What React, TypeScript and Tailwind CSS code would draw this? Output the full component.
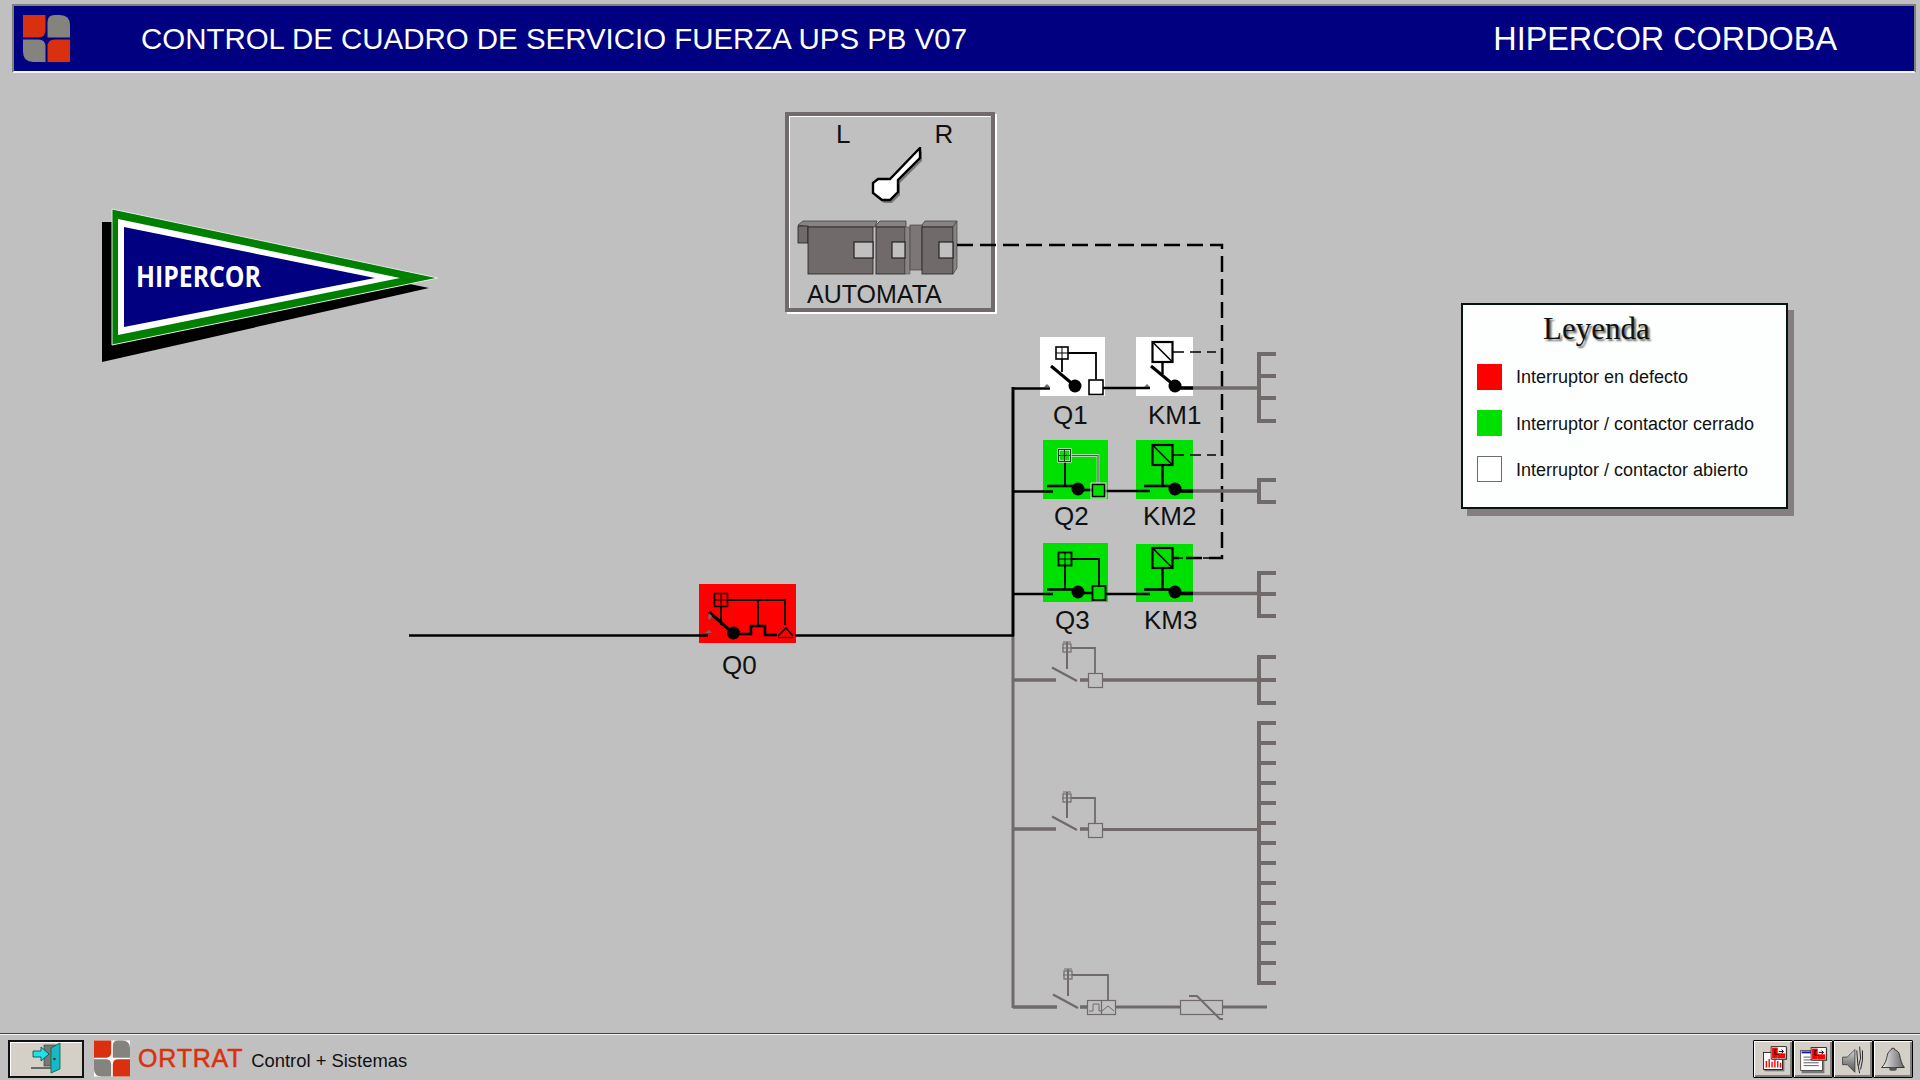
import React from "react";

const GRAY = "#716a6a";

const Logo: React.FC<{ className: string; cross?: string }> = ({ className, cross }) => (
  <svg viewBox="0 0 46 46" className={className}>
    {cross && <rect width="46" height="46" fill={cross} />}
    <path d="M0 0H22V15Q22 22 15 22H0Z" fill="#d9310f" />
    <path d="M24 7Q24 0 31 0H36Q46 0 46 10V22H24Z" fill="#85837d" />
    <path d="M0 24H15Q22 24 22 31V46H10Q0 46 0 36Z" fill="#85837d" />
    <path d="M31 24H46V46H24V31Q24 24 31 24Z" fill="#d9310f" />
  </svg>
);

const Pennant: React.FC = () => (
  <svg viewBox="100 206 342 158" className="absolute left-[100px] top-[133px] w-[342px] h-[158px]">
    <polygon points="102,222 112,222 429,288 102,362" fill="#000" />
    <polygon points="112,209 438,278 112,345" fill="#008000" stroke="#e8e8e8" strokeWidth="1" />
    <polygon points="118,219 400,278 118,335" fill="#fff" />
    <polygon points="124,227 375,278 124,327" fill="#000080" />
    <text x="136" y="287" fill="#fff" fontFamily="'Open Sans', sans-serif" fontWeight="700" fontSize="29" textLength="125" lengthAdjust="spacingAndGlyphs">
      HIPERCOR
    </text>
  </svg>
);

const PlcPanel: React.FC = () => (
  <div className="absolute left-[785px] top-[39px] w-[210px] h-[200px] border-4 border-[#716a6a] shadow-[inset_1px_1px_0_#fff,2px_2px_0_#fff] flex flex-col text-[#111]">
    <div className="flex pt-[6px] pl-[47px] text-[26px] leading-[25px]">
      <span>L</span>
      <span className="ml-[84px]">R</span>
    </div>
    <svg viewBox="789 147 202 135" className="w-[202px] h-[135px]">
      <polygon points="922,151 922,161 900,183 900,195 892,203 884,203 875,196 875,186 880,182 892,182 919,154" fill="#7d7676" />
      <polygon points="920,148 920,158 898,180 898,192 890,200 882,200 873,193 873,183 878,179 890,179 917,151" fill="#fff" stroke="#000" strokeWidth="2.4" />
      {/* top strips */}
      <polygon points="798,225 803,221 877,221 875,227 808,227" fill="#8a8383" stroke="#333" strokeWidth="0.7" />
      <polygon points="876,225 880,221 906,221 906,227 876,227" fill="#8a8383" stroke="#333" strokeWidth="0.7" />
      <polygon points="922,225 925,221 957,221 953,227 922,227" fill="#8a8383" stroke="#333" strokeWidth="0.7" />
      <rect x="798" y="226" width="10" height="17" fill={GRAY} stroke="#222" strokeWidth="0.8" />
      <rect x="808" y="227" width="65" height="47" fill={GRAY} stroke="#222" strokeWidth="0.8" />
      <rect x="876" y="227" width="29" height="47" fill={GRAY} stroke="#222" strokeWidth="0.8" />
      <rect x="905" y="227" width="5" height="47" fill="#8a8383" stroke="#555" strokeWidth="0.6" />
      <rect x="910" y="225" width="12" height="45" fill="#7d7676" stroke="#444" strokeWidth="0.7" />
      <rect x="922" y="227" width="31" height="47" fill={GRAY} stroke="#222" strokeWidth="0.8" />
      <polygon points="953,227 957,221 957,268 953,274" fill="#8a8383" stroke="#444" strokeWidth="0.7" />
      <rect x="854" y="242" width="19" height="16" fill="#c0c0c0" stroke="#222" strokeWidth="1.2" />
      <rect x="892" y="242" width="13" height="16" fill="#c0c0c0" stroke="#222" strokeWidth="1.2" />
      <rect x="939" y="242" width="14" height="16" fill="#c0c0c0" stroke="#222" strokeWidth="1.2" />
    </svg>
    <span className="pl-[18px] text-[25px] leading-[24px]">AUTOMATA</span>
  </div>
);

const Legend: React.FC = () => {
  const rows = [
    { swatch: "bg-[#ff0000]", label: "Interruptor en defecto", pad: "pl-[14px]" },
    { swatch: "bg-[#00e000]", label: "Interruptor / contactor cerrado", pad: "pl-[14px] pt-[1px]" },
    { swatch: "bg-white border border-[#716a6a]", label: "Interruptor / contactor abierto", pad: "pl-[14px] pt-[2px]" },
  ];
  return (
    <div className="absolute left-[1461px] top-[230px] w-[327px] h-[206px] bg-[#fdfffe] border-2 border-[#08140f] shadow-[6px_7px_0_#857e7e] pl-[14px] text-[#111]">
      <h2 className="pl-[66px] pt-[5px] h-[59px] text-[31px] leading-[38px] text-[#111] font-['Liberation_Serif',serif] [text-shadow:2px_2px_2px_#666]">Leyenda</h2>
      <div className="flex flex-col gap-5">
        {rows.map((r) => (
          <div key={r.label} className="flex items-center h-[26px]">
            <span className={`w-[25px] h-[26px] shrink-0 ${r.swatch}`} />
            <span className={`${r.pad} text-[18px] leading-[26px]`}>{r.label}</span>
          </div>
        ))}
      </div>
    </div>
  );
};

const GridBox: React.FC<{ x: number; y: number; s: number; color?: string; w?: number }> = ({ x, y, s, color = "#000", w = 1.5 }) => (
  <g stroke={color} strokeWidth={w} fill="none">
    <rect x={x} y={y} width={s} height={s} />
    <path d={`M${x + s / 2} ${y}V${y + s}M${x} ${y + s / 2}H${x + s}`} strokeWidth={1} />
  </g>
);

const Coil: React.FC<{ y: number; to: number }> = ({ y, to }) => (
  <g stroke="#000" fill="none">
    <rect x="1152.5" y={y} width="20" height="20" strokeWidth="2.2" />
    <path d={`M1152.5 ${y}L1172.5 ${y + 20}`} strokeWidth="1.6" />
    <path d={`M1162.5 ${y + 20}V${to}`} strokeWidth="2.4" />
    <path d={`M1173 ${y + 10}H${y > 500 ? 1222 : 1216}`} strokeWidth="1.6" strokeDasharray={y > 500 ? "10 5" : "11 6"} />
  </g>
);

const Comb: React.FC<{ teeth: number[] }> = ({ teeth }) => (
  <g stroke={GRAY} strokeWidth="4" fill="none">
    <path d={`M1259 ${teeth[0] - 2}V${teeth[teeth.length - 1] + 2}`} />
    {teeth.map((t) => (
      <path key={t} d={`M1259 ${t}H1276`} />
    ))}
  </g>
);

// disabled (grey) open breaker on the lower branches
const GreyFeeder: React.FC<{ y: number; boxTop: number; ox?: number }> = ({ y, boxTop, ox = 0 }) => (
  <g stroke={GRAY} fill="none">
    <path d={`M1013 ${y}H${1056 + ox}`} strokeWidth="3.5" />
    <path d={`M${1052 + ox} ${y - 12.5}L${1077 + ox} ${y + 1}`} strokeWidth="2.4" />
    <path d={`M1080 ${y}H1088`} strokeWidth="3.5" />
    <rect x={1063 + ox} y={boxTop} width="8" height="8" strokeWidth="1.2" />
    <path d={`M${1063 + ox} ${boxTop - 2}H${1071 + ox}M${1062 + ox} ${boxTop + 4}H${1072 + ox}`} strokeWidth="1.2" />
    <path d={`M${1067 + ox} ${boxTop - 2}V${y - 11}`} strokeWidth="2" />
  </g>
);

const Diagram: React.FC = () => {
  const text = { fontSize: 26, fill: "#111", fontFamily: "'Liberation Sans', Arial, sans-serif" };
  return (
    <svg viewBox="0 73 1920 960" className="absolute inset-0 w-[1920px] h-[960px]">
      {/* state backgrounds */}
      <rect x="699" y="584" width="97" height="59" fill="#ff0000" />
      <rect x="1040" y="337" width="65" height="59" fill="#fff" />
      <rect x="1136" y="337" width="57" height="59" fill="#fff" />
      <rect x="1043" y="440" width="65" height="59" fill="#00e000" />
      <rect x="1136" y="440" width="57" height="59" fill="#00e000" />
      <rect x="1043" y="543" width="65" height="59" fill="#00e000" />
      <rect x="1136" y="544" width="57" height="58" fill="#00e000" />

      {/* PLC link */}
      <path d="M957 245H1222V558H1173" fill="none" stroke="#000" strokeWidth="2.5" strokeDasharray="16 7" />

      {/* main bus */}
      <path d="M1013 636V1008" stroke={GRAY} strokeWidth="3" />
      <path d="M1013 387V636" stroke="#000" strokeWidth="3" />
      <path d="M409 635.5H708M795 635.5H1014" stroke="#000" strokeWidth="2.6" />

      {/* Q0 */}
      <g stroke="#000" fill="none">
        <path d="M709 612L733 633" strokeWidth="3" />
        <path d="M733 634H751V626H765V635H777" strokeWidth="2.6" />
        <GridBox x={714.5} y={593.5} s={13} />
        <path d="M721 607V625M728 600H785V625M758 600V626" strokeWidth="1.8" />
        <path d="M778 636L786 628L793 636" strokeWidth="1.6" />
        <path d="M778 637.5H793" strokeWidth="1.2" />
      </g>
      <circle cx="733.5" cy="633" r="6.5" fill="#000" />
      <polygon points="705,633 709,630 712,633" fill={GRAY} />
      <polygon points="709,613 712,616 710,620 708,618" fill={GRAY} />

      {/* Q1 */}
      <g stroke="#000" fill="none">
        <path d="M1013 388.5H1050M1103 388H1150" strokeWidth="2.6" />
        <path d="M1051 366L1075 386" strokeWidth="3" />
        <GridBox x={1056} y={347} s={12} w={1.6} />
        <path d="M1062 359V372M1068 353H1096V379" strokeWidth="1.8" />
      </g>
      <circle cx="1075" cy="386" r="6.5" fill="#000" />
      <rect x="1089" y="380" width="14" height="14.5" fill="#fff" stroke="#000" strokeWidth="1.6" />
      <polygon points="1044,387 1047,384 1050,387" fill={GRAY} />

      {/* KM1 */}
      <path d="M1151 366L1175 386" stroke="#000" strokeWidth="3" />
      <circle cx="1175" cy="386" r="6.5" fill="#000" />
      <path d="M1175 388H1193" stroke="#000" strokeWidth="3.6" />
      <path d="M1193 388H1258" stroke={GRAY} strokeWidth="3.6" />
      <polygon points="1144,387 1147,384 1150,387" fill={GRAY} />
      <Coil y={342} to={374} />

      {/* Q2 */}
      <g fill="none">
        <path d="M1013 491.5H1053M1105 491H1150" stroke="#000" strokeWidth="2.6" />
        <path d="M1047 486H1075" stroke="#000" strokeWidth="2.6" />
        <path d="M1075 490H1092" stroke="#000" strokeWidth="2.6" />
        <path d="M1065 462V486" stroke="#000" strokeWidth="1.8" />
        <path d="M1071 455.5H1098V484" stroke="#dcdcdc" strokeWidth="2.6" />
        <path d="M1071 455.5H1098V484" stroke="#555" strokeWidth="1.2" />
        <GridBox x={1058.5} y={449.5} s={12} color="#dcdcdc" w={2.4} />
        <GridBox x={1058.5} y={449.5} s={12} color="#333" w={1} />
      </g>
      <circle cx="1078" cy="489" r="6.5" fill="#000" />
      <rect x="1091" y="483" width="15" height="15" fill="none" stroke="#ddd" strokeWidth="1" />
      <rect x="1092.5" y="484.5" width="12" height="12" fill="#00e000" stroke="#000" strokeWidth="1.4" />

      {/* KM2 */}
      <path d="M1144 486H1170" stroke="#000" strokeWidth="2.6" />
      <circle cx="1175" cy="489" r="6.5" fill="#000" />
      <path d="M1175 491H1193" stroke="#000" strokeWidth="3.6" />
      <path d="M1193 491H1258" stroke={GRAY} strokeWidth="3.6" />
      <Coil y={445} to={486} />

      {/* Q3 */}
      <g stroke="#000" fill="none">
        <path d="M1013 594H1053M1106 594H1150" strokeWidth="2.6" />
        <path d="M1047 589.5H1075M1075 593H1092" strokeWidth="2.6" />
        <GridBox x={1058.5} y={552.5} s={13} w={1.8} />
        <path d="M1065 565.5V589M1071 559H1099V586" strokeWidth="1.8" />
      </g>
      <circle cx="1078" cy="592" r="6.5" fill="#000" />
      <rect x="1092.5" y="586" width="13" height="14" fill="#00e000" stroke="#000" strokeWidth="1.8" />

      {/* KM3 */}
      <path d="M1144 589.5H1170" stroke="#000" strokeWidth="2.6" />
      <circle cx="1175" cy="592" r="6.5" fill="#000" />
      <path d="M1175 593.5H1193" stroke="#000" strokeWidth="3.6" />
      <path d="M1193 593.5H1258" stroke={GRAY} strokeWidth="3.6" />
      <Coil y={548} to={589} />

      {/* outgoing combs */}
      <Comb teeth={[354, 376, 398, 421]} />
      <Comb teeth={[480, 502]} />
      <Comb teeth={[573, 594, 616]} />
      <Comb teeth={[657, 680, 703]} />
      <Comb teeth={[723, 743, 763, 783, 803, 823, 843, 863, 883, 903, 923, 943, 963, 983]} />

      {/* disabled feeders */}
      <GreyFeeder y={680} boxTop={644} />
      <rect x="1088.5" y="673.5" width="14" height="14" fill="none" stroke={GRAY} strokeWidth="1.2" />
      <path d="M1103 680H1258" stroke={GRAY} strokeWidth="3.6" />
      <path d="M1071 648H1095V673" fill="none" stroke={GRAY} strokeWidth="1.8" />

      <GreyFeeder y={829} boxTop={794} />
      <rect x="1088.5" y="823.5" width="14" height="14" fill="none" stroke={GRAY} strokeWidth="1.2" />
      <path d="M1103 829.5H1258" stroke={GRAY} strokeWidth="3" />
      <path d="M1071 798H1095V823" fill="none" stroke={GRAY} strokeWidth="1.8" />

      <GreyFeeder y={1007} boxTop={971} ox={1} />
      <g fill="none" stroke={GRAY}>
        <rect x="1087.5" y="1000.5" width="28" height="14" strokeWidth="1.2" />
        <path d="M1101.5 1000.5V1014.5" strokeWidth="1.2" />
        <path d="M1089 1011H1093V1004H1099V1011H1101" strokeWidth="1" />
        <path d="M1102 1011L1108 1006L1114 1011" strokeWidth="1" />
        <path d="M1072 975H1108V1000" strokeWidth="1.8" />
        <path d="M1116 1007H1180M1223 1007H1267" strokeWidth="3" />
        <rect x="1180.5" y="1000.5" width="42" height="14" strokeWidth="1.2" />
        <path d="M1189 996H1197L1220 1019H1223" strokeWidth="2" />
      </g>

      {/* labels */}
      <text x="722" y="674" {...text}>Q0</text>
      <text x="1053" y="424" {...text}>Q1</text>
      <text x="1148" y="424" {...text}>KM1</text>
      <text x="1054" y="525" {...text}>Q2</text>
      <text x="1143" y="525" {...text}>KM2</text>
      <text x="1055" y="629" {...text}>Q3</text>
      <text x="1144" y="629" {...text}>KM3</text>
    </svg>
  );
};

const MiniReturn: React.FC<{ x: number; y: number }> = ({ x, y }) => (
  <g>
    <rect x={x + 1} y={y + 1} width="16" height="13" fill="#777" />
    <rect x={x} y={y} width="16" height="13" fill="#fff" stroke="#000" strokeWidth="0.8" />
    <rect x={x + 1} y={y + 1} width="6" height="11" fill="#f00" />
    <rect x={x + 7} y={y + 7} width="8" height="5" fill="#f00" />
    <path d={`M${x + 6} ${y + 3}H${x + 4}V${y + 8}H${x + 8}M${x + 8} ${y + 5}H${x + 13}M${x + 11} ${y + 3}L${x + 13} ${y + 5}L${x + 11} ${y + 7}`} fill="none" stroke="#000" strokeWidth="1" />
  </g>
);

const ToolButton: React.FC<{ children: React.ReactNode }> = ({ children }) => (
  <button className="w-10 h-[38px] bg-[#d4d0c8] border border-black rounded-[1px] shadow-[inset_1px_1px_0_#fff,inset_-2px_-2px_0_#808080]">
    <svg viewBox="0 0 40 38" className="w-full h-full">{children}</svg>
  </button>
);

const Footer: React.FC = () => (
  <div className="h-[47px] border-t border-[#444] shadow-[inset_0_1px_0_#f4f4f4] flex items-center pl-2 pr-[7px] pt-[3px]">
    <button className="w-[76px] h-[38px] bg-[#d4d0c8] border-2 border-[#111] shadow-[inset_1px_1px_0_#fff]">
      <svg viewBox="0 0 72 34" className="w-[72px] h-[34px]">
        <path d="M21 26H45" stroke="#000" strokeWidth="1" />
        <rect x="34" y="3" width="12" height="21" fill="#777" stroke="#333" strokeWidth="0.6" />
        <polygon points="41,6 50,1 50,27 41,31" fill="#18b8c8" stroke="#063" strokeWidth="0.8" />
        <circle cx="44.5" cy="17" r="1.2" fill="#333" />
        <polygon points="23,9 31,9 31,5 39,12 31,19 31,15 23,15" fill="#20e0e8" stroke="#044" strokeWidth="0.8" />
      </svg>
    </button>
    <Logo className="ml-[10px] w-9 h-[37px]" cross="#ffffff" />
    <span className="ml-2 text-[#d9310f] text-[25px] leading-none tracking-[0.8px] [-webkit-text-stroke:0.5px_#d9310f]">ORTRAT</span>
    <span className="ml-2 pt-[5px] text-[18.4px] leading-none text-[#111]">Control + Sistemas</span>
    <div className="ml-auto flex">
      <ToolButton>
        <rect x="11" y="14" width="21" height="18" fill="#777" />
        <rect x="10" y="12" width="20" height="18" fill="#fff" stroke="#000" strokeWidth="0.8" />
        <path d="M13 28V21M16 28V19M19 28V22M22 28V20M25 28V21M28 28V23" stroke="#f00" strokeWidth="1.5" />
        <MiniReturn x={18} y={6} />
      </ToolButton>
      <ToolButton>
        <rect x="8" y="12" width="24" height="22" fill="#777" />
        <rect x="7" y="10" width="23" height="21" fill="#fff" stroke="#333" strokeWidth="0.8" />
        <rect x="8" y="11" width="10" height="2" fill="#1010d0" />
        <path d="M10 17H17M10 20H26M10 23H26M10 26H26" stroke="#555" strokeWidth="1" />
        <MiniReturn x={18} y={7} />
      </ToolButton>
      <ToolButton>
        <defs>
          <linearGradient id="cone" x1="0" y1="0" x2="0" y2="1">
            <stop offset="0" stopColor="#d8d8d8" />
            <stop offset="0.55" stopColor="#8a8a8a" />
            <stop offset="1" stopColor="#555" />
          </linearGradient>
          <linearGradient id="bell" x1="0" y1="0" x2="1" y2="0">
            <stop offset="0" stopColor="#f0f0f0" />
            <stop offset="0.5" stopColor="#aaa" />
            <stop offset="1" stopColor="#666" />
          </linearGradient>
        </defs>
        <polygon points="9,17 14,17 22,9 22,33 14,25 9,25" fill="url(#cone)" stroke="#333" strokeWidth="0.8" />
        <path d="M24 10L25 24L27 34M27 6L28 18L26 26M30 10L30 20L28 30" fill="none" stroke="#222" strokeWidth="1" />
      </ToolButton>
      <ToolButton>
        <path d="M8 28C12 24 13 20 14 15C15 11 17 10 18 9.5A2 2 0 0 1 22 9.5C24 10 26 11 27 15C28 20 29 24 32 28Z" fill="url(#bell)" stroke="#222" strokeWidth="0.9" />
        <ellipse cx="20" cy="29.5" rx="4" ry="2" fill="#555" />
      </ToolButton>
    </div>
  </div>
);

const App: React.FC = () => {
  return (
    <div className="w-[1920px] h-[1080px] flex flex-col overflow-hidden bg-[#c0c0c0] font-['Liberation_Sans',Arial,sans-serif]">
      <div className="pt-[4px] pl-3 pr-[4px]">
        <div className="h-[69px] bg-[#000080] border-2 border-t-[#7f7f7f] border-l-[#7f7f7f] border-r-[#7f7f7f] border-b-[#f4f4f4] flex items-center text-white">
          <Logo className="ml-[9px] w-[47px] h-[47px]" />
          <h1 className="ml-[71px] text-[29.45px] leading-none">CONTROL DE CUADRO DE SERVICIO FUERZA UPS PB V07</h1>
          <span className="ml-auto mr-[77px] pt-[2px] text-[32.4px] leading-none">HIPERCOR CORDOBA</span>
        </div>
      </div>
      <div className="relative flex-1">
        <Pennant />
        <PlcPanel />
        <Legend />
        <Diagram />
      </div>
      <Footer />
    </div>
  );
};

export default App;
